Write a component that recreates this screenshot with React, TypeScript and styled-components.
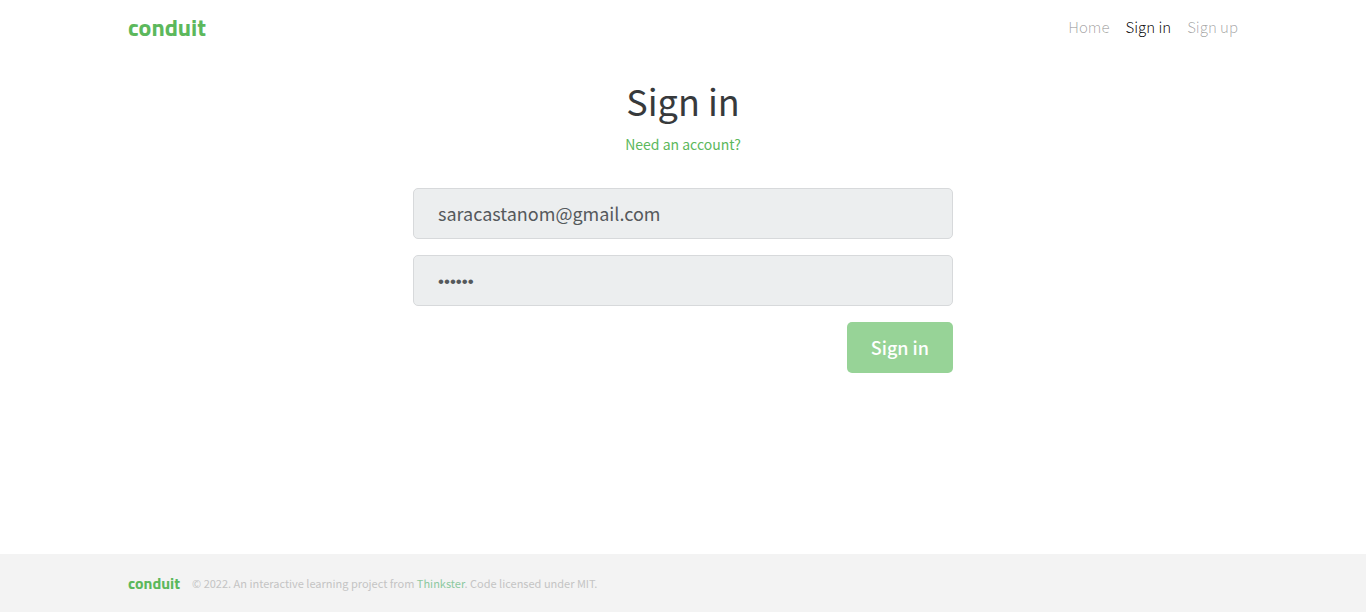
import React from "react";
import styled, { createGlobalStyle } from "styled-components";

const GlobalStyle = createGlobalStyle`
  *, *::before, *::after { box-sizing: border-box; }
  body {
    margin: 0;
    background: #fff;
    color: #373a3c;
    font-family: "Source Sans Pro", "Noto Sans CJK SC", sans-serif;
    font-size: 15px;
    line-height: 24px;
  }
  a { text-decoration: none; }
`;

const Page = styled.div`
  display: flex;
  flex-direction: column;
  min-height: 100vh;
`;

const Container = styled.div`
  width: 100%;
  max-width: 1140px;
  margin: 0 auto;
  padding: 0 15px;
`;

const Bar = styled(Container)`
  display: flex;
  align-items: center;
  justify-content: space-between;
  min-height: 54px;
`;

const Brand = styled.a<{ $small?: boolean }>`
  color: #5cb85c;
  font-family: "Titillium Web", "Noto Sans CJK SC", sans-serif;
  font-weight: 700;
  font-size: ${(p) => (p.$small ? 16 : 24)}px;
`;

const NavList = styled.ul`
  display: flex;
  gap: 16px;
  margin: 0;
  padding: 0;
  list-style: none;
`;

const NavLink = styled.a<{ $active?: boolean }>`
  color: ${(p) => (p.$active ? "rgba(0, 0, 0, 0.95)" : "rgba(0, 0, 0, 0.35)")};
  font-weight: 300;
`;

const Main = styled.main`
  flex: 1;
  padding: 24px 0;
`;

const Panel = styled.div`
  width: 100%;
  max-width: 540px;
  margin: 0 auto;
`;

const Title = styled.h1`
  margin: 0 0 10px;
  font-size: 36px;
  font-weight: 400;
  line-height: 44px;
  text-align: center;
`;

const Hint = styled.p`
  margin: 0 0 32px;
  font-size: 14px;
  text-align: center;
`;

const GreenLink = styled.a<{ $muted?: boolean }>`
  color: ${(p) => (p.$muted ? "#8cc9a0" : "#5cb85c")};
`;

const Form = styled.form`
  display: flex;
  flex-direction: column;
  gap: 16px;
`;

const Field = styled.input`
  width: 100%;
  height: 51px;
  padding: 12px 24px 14px;
  border: 1px solid #d7d9db;
  border-radius: 5px;
  background: #eceeef;
  color: #55595c;
  font-family: inherit;
  font-size: 18px;

  &[type="password"] {
    padding: 14px 24px 12px;
    font-family: "Liberation Sans", sans-serif;
    font-size: 17px;
  }
`;

const Submit = styled.button`
  align-self: flex-end;
  height: 51px;
  padding: 0 24px 2px;
  border: 0;
  border-radius: 5px;
  background: #97d397;
  color: #fff;
  font-family: inherit;
  font-size: 18px;
  font-weight: 500;
`;

const Footer = styled.footer`
  background: #f3f3f3;
`;

const FooterRow = styled(Container)`
  display: flex;
  align-items: center;
  gap: 12px;
  min-height: 58px;
`;

const Attribution = styled.span`
  color: #c4c4c4;
  font-size: 11px;
  font-weight: 400;
`;

export default function App() {
  return (
    <Page>
      <GlobalStyle />
      <nav>
        <Bar>
          <Brand href="#home">conduit</Brand>
          <NavList>
            <li><NavLink href="#home">Home</NavLink></li>
            <li><NavLink href="#login" $active aria-current="page">Sign in</NavLink></li>
            <li><NavLink href="#register">Sign up</NavLink></li>
          </NavList>
        </Bar>
      </nav>
      <Main>
        <Container>
          <Panel>
            <Title>Sign in</Title>
            <Hint><GreenLink href="#register">Need an account?</GreenLink></Hint>
            <Form>
              <Field type="email" aria-label="Email" defaultValue="saracastanom@gmail.com" disabled />
              <Field type="password" aria-label="Password" defaultValue="secret" disabled />
              <Submit type="submit" disabled>Sign in</Submit>
            </Form>
          </Panel>
        </Container>
      </Main>
      <Footer>
        <FooterRow>
          <Brand href="#home" $small>conduit</Brand>
          <Attribution>
            © 2022. An interactive learning project from{" "}
            <GreenLink href="#thinkster" $muted>Thinkster</GreenLink>. Code licensed under MIT.
          </Attribution>
        </FooterRow>
      </Footer>
    </Page>
  );
}
